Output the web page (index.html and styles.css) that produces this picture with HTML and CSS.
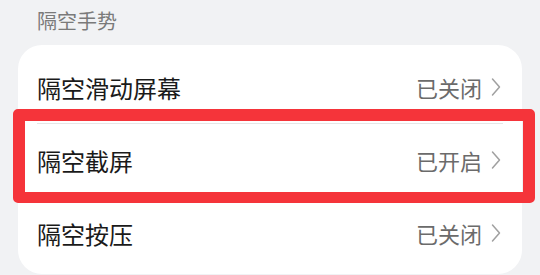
FILE: index.html
```html
<!DOCTYPE html>
<html lang="zh-CN">
<head>
<meta charset="utf-8">
<link rel="stylesheet" href="styles.css">
</head>
<body>
<div class="page">
  <div class="section-title">隔空手势</div>
  <div class="card">
    <div class="row">
      <span class="label">隔空滑动屏幕</span>
      <span class="value">已关闭<svg class="chev" viewBox="0 0 10 20" width="10" height="20"><path d="M1.5 2 L8.5 10 L1.5 18" fill="none" stroke="#a0a0a0" stroke-width="1.5" stroke-linecap="round" stroke-linejoin="round"/></svg></span>
    </div>
    <div class="divider"></div>
    <div class="row">
      <span class="label">隔空截屏</span>
      <span class="value">已开启<svg class="chev" viewBox="0 0 10 20" width="10" height="20"><path d="M1.5 2 L8.5 10 L1.5 18" fill="none" stroke="#a0a0a0" stroke-width="1.5" stroke-linecap="round" stroke-linejoin="round"/></svg></span>
    </div>
    <div class="divider"></div>
    <div class="row">
      <span class="label">隔空按压</span>
      <span class="value">已关闭<svg class="chev" viewBox="0 0 10 20" width="10" height="20"><path d="M1.5 2 L8.5 10 L1.5 18" fill="none" stroke="#a0a0a0" stroke-width="1.5" stroke-linecap="round" stroke-linejoin="round"/></svg></span>
    </div>
    <div class="highlight"></div>
  </div>
</div>
</body>
</html>
```
FILE: styles.css
```css
html, body {
  margin: 0;
  padding: 0;
  background: #f1f2f4;
}
body {
  width: 540px;
  height: 275px;
  overflow: hidden;
  font-family: "Noto Sans CJK SC", "Noto Sans", sans-serif;
}
.page {
  display: flex;
  flex-direction: column;
}
.section-title {
  height: 45px;
  line-height: 42px;
  padding-left: 37px;
  font-size: 20px;
  color: #7a7a7a;
}
.card {
  position: relative;
  margin-left: 18px;
  width: 504px;
  background: #ffffff;
  border-radius: 24px;
  padding: 6px 0 5px;
  display: flex;
  flex-direction: column;
}
.row {
  height: 72px;
  display: flex;
  align-items: center;
  justify-content: space-between;
  padding: 0 21px 0 19px;
}
.label {
  font-size: 24px;
  color: #1a1a1a;
}
.value {
  display: flex;
  align-items: center;
  gap: 9px;
  font-size: 22px;
  color: #6b6b6b;
}
.chev {
  display: block;
}
.divider {
  height: 1px;
  margin: 0 19px;
  background: #e6e6e6;
}
.highlight {
  position: absolute;
  top: 64px;
  left: -5px;
  width: 522px;
  height: 94px;
  box-sizing: border-box;
  border: 12px solid #f5343a;
  border-bottom-width: 11px;
  border-radius: 5px;
}
```
